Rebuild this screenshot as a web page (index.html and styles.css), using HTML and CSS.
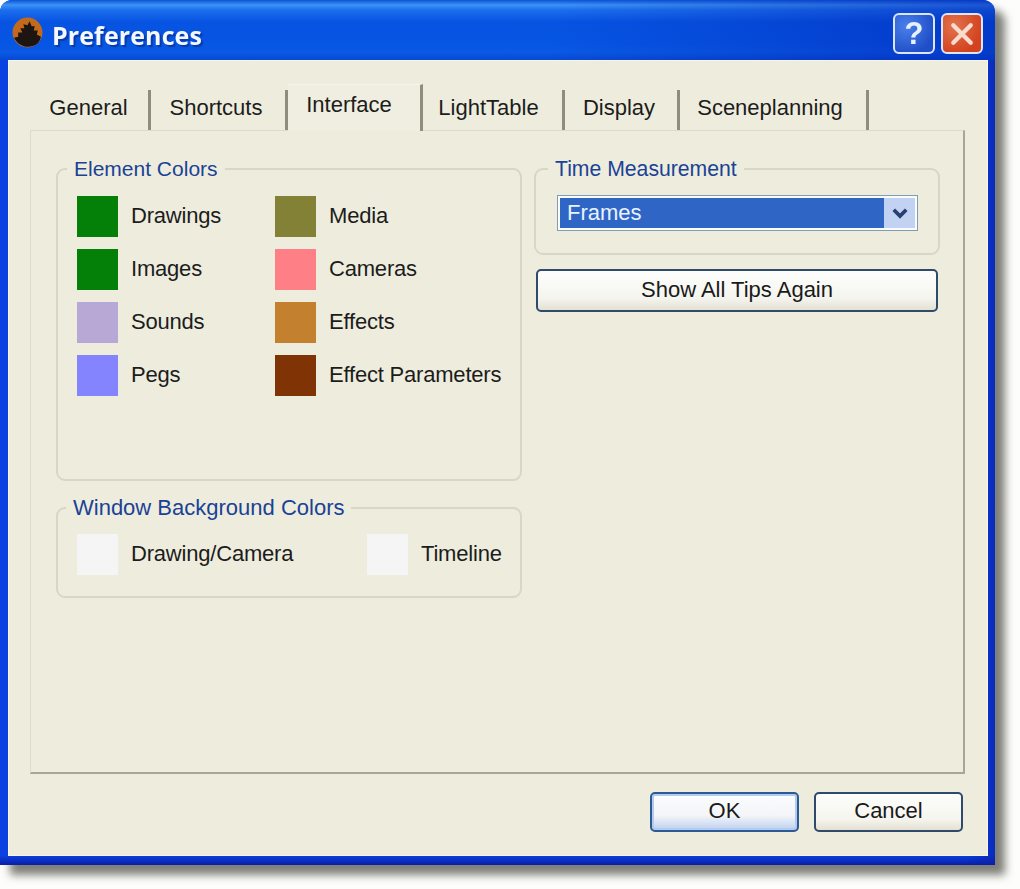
FILE: index.html
```html
<!DOCTYPE html>
<html lang="en">
<head>
<meta charset="utf-8">
<title>Preferences</title>
<link rel="stylesheet" href="styles.css">
</head>
<body>
<div class="window">
  <header class="titlebar">
    <svg class="app-icon" viewBox="0 0 30 30" aria-hidden="true">
      <circle cx="15" cy="15" r="14.5" fill="#c2691e"/>
      <path d="M2 20 L6 19 L6 15 L10 15 L8 11 L12 11 L11 7 L15 8 L17 4 L19 9 L22 9 L21 13 L25 13 L24 17 L28 19 C27 24 24 27 20 28 C14 30 6 28 2 20Z" fill="#1d1512"/>
    </svg>
    <span class="title">Preferences</span>
    <div class="caption-buttons">
      <span class="caption help">?</span>
      <span class="caption close">
        <svg viewBox="0 0 24 24" aria-hidden="true"><path d="M5 5 L19 19 M19 5 L5 19" stroke="#f8dccf" stroke-width="3.4" stroke-linecap="round"/></svg>
      </span>
    </div>
  </header>
  <main class="client">
    <nav class="tabs">
      <span class="tab tab-general">General</span>
      <span class="tab tab-shortcuts">Shortcuts</span>
      <span class="tab active tab-interface">Interface</span>
      <span class="tab tab-lighttable">LightTable</span>
      <span class="tab tab-display">Display</span>
      <span class="tab tab-scene">Sceneplanning</span>
    </nav>
    <section class="panel">
      <div class="col-left">
        <fieldset class="group group-element">
          <legend>Element Colors</legend>
          <div class="swatch-grid">
            <div class="item"><span class="swatch c-green"></span><span class="label">Drawings</span></div>
            <div class="item"><span class="swatch c-olive"></span><span class="label">Media</span></div>
            <div class="item"><span class="swatch c-green"></span><span class="label">Images</span></div>
            <div class="item"><span class="swatch c-pink"></span><span class="label">Cameras</span></div>
            <div class="item"><span class="swatch c-lilac"></span><span class="label">Sounds</span></div>
            <div class="item"><span class="swatch c-ochre"></span><span class="label">Effects</span></div>
            <div class="item"><span class="swatch c-blue"></span><span class="label">Pegs</span></div>
            <div class="item"><span class="swatch c-brown"></span><span class="label">Effect Parameters</span></div>
          </div>
        </fieldset>
        <fieldset class="group group-window">
          <legend>Window Background Colors</legend>
          <div class="bg-row">
            <div class="item"><span class="swatch c-white"></span><span class="label">Drawing/Camera</span></div>
            <div class="item"><span class="swatch c-white"></span><span class="label">Timeline</span></div>
          </div>
        </fieldset>
      </div>
      <div class="col-right">
        <fieldset class="group group-time">
          <legend>Time Measurement</legend>
          <div class="combo">
            <span class="combo-value">Frames</span>
            <span class="combo-arrow">
              <svg viewBox="0 0 16 12" aria-hidden="true"><path d="M3 3 L8 8 L13 3" fill="none" stroke="#27406f" stroke-width="3"/></svg>
            </span>
          </div>
        </fieldset>
        <button class="btn btn-wide" type="button">Show All Tips Again</button>
      </div>
    </section>
    <footer class="actions">
      <button class="btn btn-action btn-default" type="button">OK</button>
      <button class="btn btn-action" type="button">Cancel</button>
    </footer>
  </main>
</div>
</body>
</html>
```
FILE: styles.css
```css
* { box-sizing: border-box; }
html, body { margin: 0; height: 100%; background: #fdfdfb; }
body { font-family: "Liberation Sans", Arial, sans-serif; font-size: 22px; color: #1c1c1c; overflow: hidden; }

.window {
  width: 995px; height: 865px;
  display: flex; flex-direction: column;
  border-radius: 12px 12px 0 0;
  background:
    linear-gradient(180deg, rgba(8, 24, 150, 0) calc(100% - 10px), #0a1fa6 100%),
    linear-gradient(90deg, #0a42e2 0, #0a42e2 97%, #0a2cbc 100%);
  box-shadow: 10px 10px 9px rgba(60, 60, 50, .65);
  filter: blur(.5px);
}

.titlebar {
  height: 60px; flex: none;
  display: flex; align-items: center;
  padding: 0 12px 0 12px;
  border-radius: 12px 12px 0 0;
  background:
    linear-gradient(90deg, rgba(10, 80, 235, 0) 55%, rgba(0, 36, 180, .55) 100%),
    linear-gradient(180deg, #0d52d8 0, #3c94f6 5px, #1c6fee 10px, #0753e2 22px, #0755e4 44px, #0a5ae4 52px, #0848d4 60px);
}
.app-icon { width: 31px; height: 31px; flex: none; margin-top: 5px; }
.title {
  margin-left: 9px; margin-top: 9px;
  font-family: "Open Sans", sans-serif; font-weight: 700; font-size: 25px;
  letter-spacing: .1px;
  color: #f4f8ff; text-shadow: 2px 2px 1px #0a3aa8;
}
.caption-buttons { margin-left: auto; display: flex; gap: 6px; margin-top: 7px; }
.caption {
  width: 42px; height: 41px;
  display: flex; align-items: center; justify-content: center;
  border: 2px solid #dbe6fb; border-radius: 6px;
}
.help {
  background: radial-gradient(circle at 30% 30%, #4a80ea, #1f4fc8 75%);
  color: #e8f1ff; font-size: 31px; font-weight: 700;
}
.close { background: radial-gradient(circle at 30% 30%, #e2734c, #d2421e 75%); }
.close svg { width: 30px; height: 30px; }

.client {
  flex: 1; min-height: 0;
  margin: 0 7px 9px 8px;
  padding: 0 0 0 22px;
  background: #eeeddd;
  display: flex; flex-direction: column;
  box-shadow: inset 0 0 0 1px #f6f6ee;
}

.tabs { height: 70px; flex: none; display: flex; align-items: flex-end; padding-left: 3px; }
.tab {
  height: 40px; flex: none;
  display: flex; align-items: center; justify-content: center;
  padding-bottom: 4px;
  border-right: 3px solid #8f8d7c;
  line-height: 1;
}
.tab-general { width: 118px; padding-right: 4px; }
.tab-shortcuts { width: 137px; padding-right: 4px; }
.tab-interface { width: 135px; padding-right: 10px; }
.tab-lighttable { width: 142px; padding-right: 8px; }
.tab-display { width: 115px; padding-right: 4px; }
.tab-scene { width: 189px; padding-right: 6px; }
.tab.active {
  height: 47px; margin-bottom: -1px; padding-bottom: 6px;
  background: #efeee0;
  border-top: 1px solid #f6f5ec;
  position: relative; z-index: 1;
}

.panel {
  width: 935px; height: 644px; flex: none;
  display: flex; align-items: flex-start; gap: 12px;
  padding: 27px 0 0 25px;
  border-style: solid;
  border-width: 1px 2px 2px 1px;
  border-color: #dcdbca #a8a795 #a8a795 #dcdbca;
}
.col-left { width: 466px; flex: none; display: flex; flex-direction: column; gap: 16px; }
.col-right { width: 406px; flex: none; display: flex; flex-direction: column; align-items: center; gap: 14px; }

.group {
  margin: 0; padding: 0; min-width: 0; width: 100%;
  border: 2px solid #d8d7c5;
  border-radius: 9px;
}
.group legend {
  margin-left: 9px; padding: 0 7px;
  color: #1a4296; line-height: 1; font-size: 21px;
}
.group-window legend { font-size: 22px; margin-left: 8px; }
.group-time legend { margin-left: 12px; font-size: 21.2px; }
.group-element { height: 323px; }
.group-window { height: 101px; }
.group-time { height: 97px; }

.swatch-grid { display: grid; grid-template-columns: 198px 1fr; row-gap: 12px; margin: 17px 0 0 19px; }
.bg-row { display: grid; grid-template-columns: 290px 1fr; margin: 15px 0 0 19px; }
.item { display: flex; align-items: center; gap: 13px; height: 41px; white-space: nowrap; letter-spacing: -.2px; }
.label { margin-top: -2px; }
.swatch { width: 41px; height: 41px; flex: none; display: block; }
.c-green { background: #047f07; }
.c-olive { background: #838136; }
.c-pink { background: #ff7f86; }
.c-lilac { background: #b8a8d6; }
.c-ochre { background: #c38130; }
.c-blue { background: #8484ff; }
.c-brown { background: #803304; }
.c-white { background: #f5f5f6; }

.combo {
  width: 361px; height: 36px;
  margin: 16px 0 0 21px;
  display: flex;
  padding: 2px;
  border: 1px solid #7f9db9;
  background: #fbfbf8;
}
.combo-value {
  flex: 1; display: flex; align-items: center;
  padding-left: 7px;
  background: #2f66c6; color: #e9f3ff;
}
.combo-arrow {
  width: 31px; flex: none;
  display: flex; align-items: center; justify-content: center;
  background: #c2d2f3;
}
.combo-arrow svg { width: 20px; height: 15px; }

.btn {
  font: inherit; color: #1a1a1a;
  background: linear-gradient(180deg, #fdfdfc 0, #f5f5ef 70%, #e4e0d2 100%);
  border: 2px solid #2f4a6a;
  border-radius: 5px;
  padding: 0 0 2px;
}
.btn-wide { width: 402px; height: 43px; }
.actions {
  flex: 1;
  display: flex; justify-content: flex-end; align-items: flex-start;
  gap: 15px; padding: 18px 25px 0 0;
}
.btn-action { width: 149px; height: 40px; }
.btn-default {
  border-color: #2b5a96;
  background: linear-gradient(180deg, #fbfcfe 0, #f3f5f8 60%, #bcd0f0 100%);
  box-shadow: inset 0 0 0 2px #b4cbee;
}
```
